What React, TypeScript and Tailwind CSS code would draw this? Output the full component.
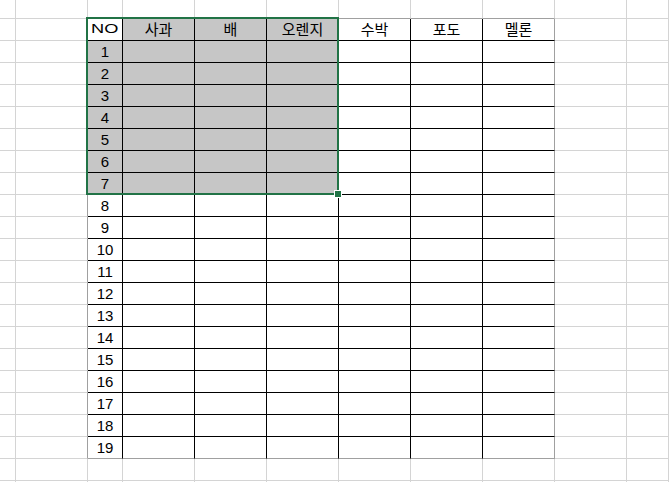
import React from "react";

const colWidths = [16, 72, 35, 72, 72, 72, 72, 72, 72, 72, 42];
const rowHeights = [19, ...Array(21).fill(22), 2];

const header = ["NO", "사과", "배", "오렌지", "수박", "포도", "멜론"];

// table sits in grid rows 1..20 and grid cols 2..8
const inTableRow = (r: number) => r >= 1 && r <= 20;
const inTableCol = (c: number) => c >= 2 && c <= 8;

function rightBorder(r: number, c: number) {
  if (!inTableRow(r)) return "border-r-[#d4d4d4]";
  if (c >= 2 && c <= 7) return "border-r-black";
  if (c === 1 || c === 8) return "border-r-[#a0a0a0]";
  return "border-r-[#d4d4d4]";
}

function bottomBorder(r: number, c: number) {
  if (!inTableCol(c)) return "border-b-[#d4d4d4]";
  if (r >= 1 && r <= 19) return "border-b-black";
  if (r === 0 || r === 20) return "border-b-[#a0a0a0]";
  return "border-b-[#d4d4d4]";
}

function cellText(r: number, c: number) {
  if (!inTableRow(r) || !inTableCol(c)) return null;
  if (r === 1 && c === 2)
    return <span className="inline-block text-[13px] font-light scale-x-[1.4] pb-[1px]">NO</span>;
  if (r === 1) return header[c - 2];
  if (c === 2) return String(r - 1);
  return null;
}

function isShaded(r: number, c: number) {
  if (r === 1 && c === 2) return false;
  return r >= 1 && r <= 8 && c >= 2 && c <= 5;
}

export default function App() {
  return (
    <div
      className="relative w-[669px] h-[482px] overflow-hidden bg-white text-black text-[15px]"
      style={{ fontFamily: '"Liberation Sans", "Noto Sans CJK KR", sans-serif' }}
    >
      <div className="flex flex-col">
        {rowHeights.map((h, r) => (
          <div key={r} className="flex shrink-0" style={{ height: h }}>
            {colWidths.map((w, c) => (
              <div
                key={c}
                className={`shrink-0 flex items-end justify-center pb-[2px] leading-[17px] border-r border-b ${rightBorder(r, c)} ${bottomBorder(r, c)} ${
                  isShaded(r, c) ? "bg-[#c6c6c6]" : "bg-white"
                }`}
                style={{ width: w }}
              >
                {cellText(r, c)}
              </div>
            ))}
          </div>
        ))}
      </div>

      {/* selection outline */}
      <div className="absolute left-[86px] top-[17px] w-[253px] h-[178px] border-2 border-[#217346] pointer-events-none" />
      {/* fill handle */}
      <div className="absolute left-[334px] top-[190px] w-[8px] h-[8px] bg-[#217346] border border-white" />
    </div>
  );
}
